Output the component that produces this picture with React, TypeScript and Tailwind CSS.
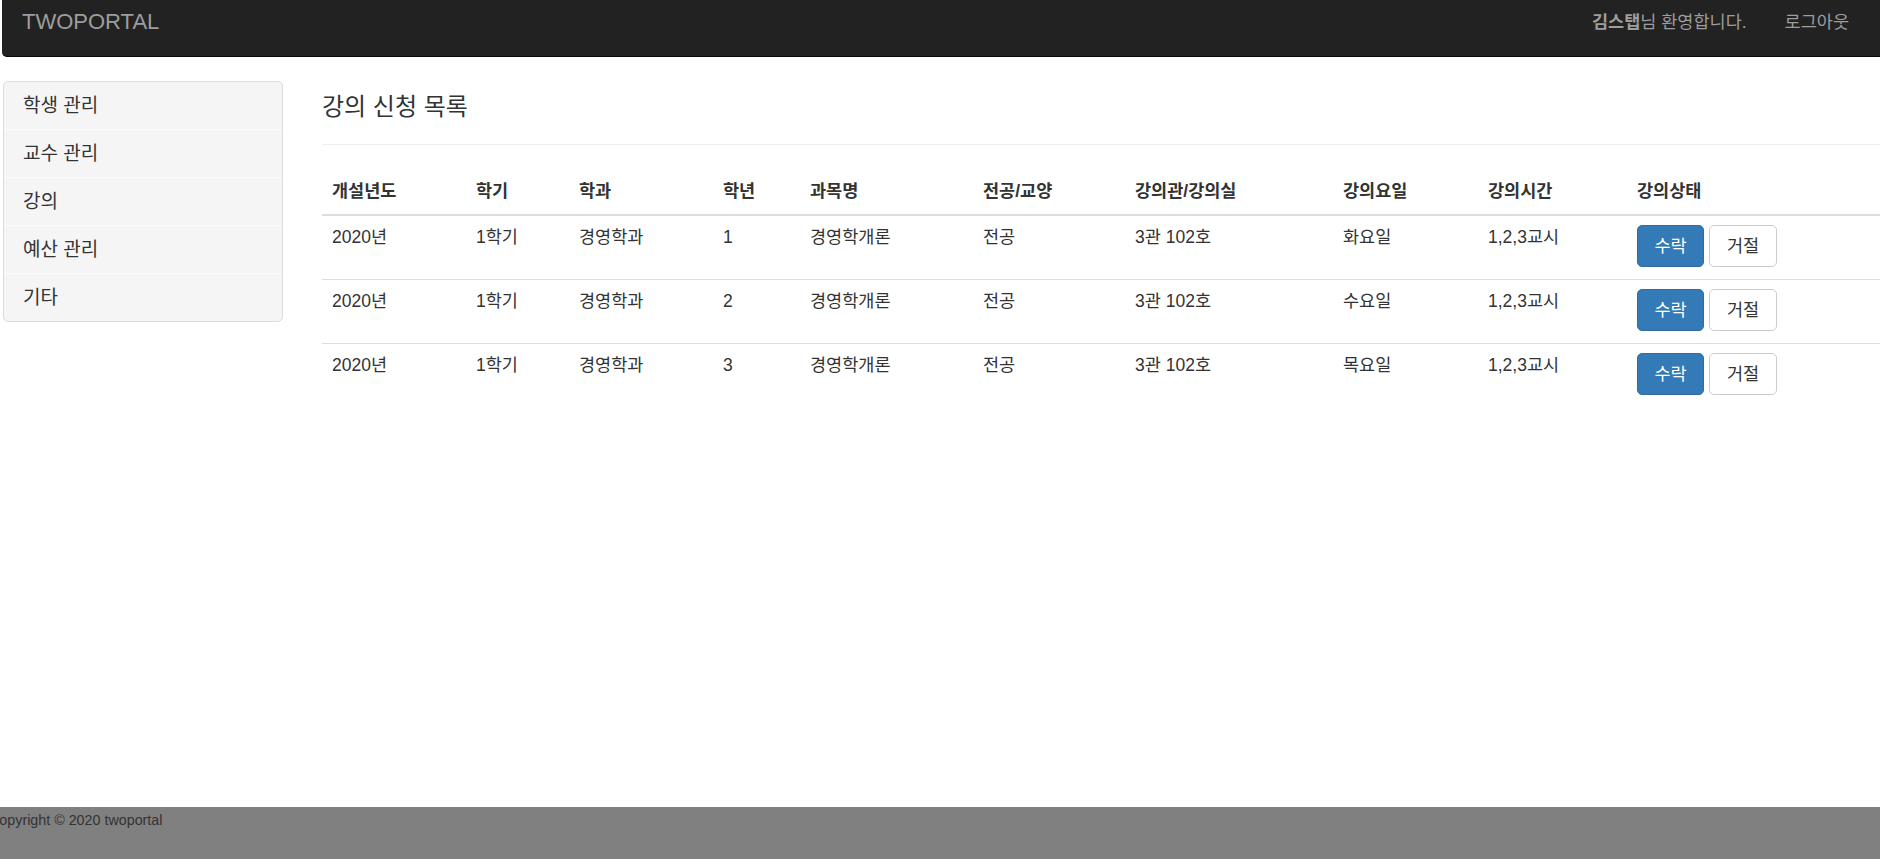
import React from 'react';

type Course = {
  year: string;
  term: string;
  dept: string;
  grade: string;
  subject: string;
  kind: string;
  room: string;
  day: string;
  time: string;
};

const courses: Course[] = [
  { year: '2020년', term: '1학기', dept: '경영학과', grade: '1', subject: '경영학개론', kind: '전공', room: '3관 102호', day: '화요일', time: '1,2,3교시' },
  { year: '2020년', term: '1학기', dept: '경영학과', grade: '2', subject: '경영학개론', kind: '전공', room: '3관 102호', day: '수요일', time: '1,2,3교시' },
  { year: '2020년', term: '1학기', dept: '경영학과', grade: '3', subject: '경영학개론', kind: '전공', room: '3관 102호', day: '목요일', time: '1,2,3교시' },
];

const headers = ['개설년도', '학기', '학과', '학년', '과목명', '전공/교양', '강의관/강의실', '강의요일', '강의시간', '강의상태'];
const colWidths = ['w-[144px]', 'w-[103px]', 'w-[144px]', 'w-[87px]', 'w-[173px]', 'w-[152px]', 'w-[208px]', 'w-[145px]', 'w-[149px]', ''];

const menu = ['학생 관리', '교수 관리', '강의', '예산 관리', '기타'];

export default function App() {
  return (
    <div className="min-h-screen flex flex-col overflow-x-hidden bg-white text-[#333] font-['Liberation_Sans','Noto_Sans_CJK_KR',sans-serif]">
      {/* navbar */}
      <div className="h-[57px] ml-[2px] -mr-[4px] bg-[#222] border-b border-[#080808] rounded-bl-[5px] flex items-start justify-between pt-[9px] shrink-0">
        <div className="pl-[20px] text-[22px] leading-[26px] text-[#9d9d9d]">TWOPORTAL</div>
        <div className="flex items-start text-[17.5px] leading-[26px] text-[#9d9d9d] pr-[35px]">
          <span>
            <b className="font-bold">김스탭</b>님 환영합니다.
          </span>
          <span className="ml-[38px]">로그아웃</span>
        </div>
      </div>

      {/* main */}
      <div className="flex-1 flex items-start">
        <div className="mt-[24px] ml-[3px] w-[280px] shrink-0 bg-[#f5f5f5] border border-[#ddd] rounded-[5px] text-[19px]">
          {menu.map((m, i) => (
            <div
              key={m}
              className={`pl-[19px] py-[11px] leading-[25px] ${i > 0 ? 'border-t border-[#fbfbfb]' : ''}`}
            >
              {m}
            </div>
          ))}
        </div>

        <div className="flex-1 min-w-0 ml-[39px]">
          <div className="mt-[37px] pb-[24px] border-b border-[#eee]">
            <h4 className="text-[24px] leading-[26px] font-normal">강의 신청 목록</h4>
          </div>

          <table className="mt-[24px] w-full table-fixed border-collapse text-[17.5px]">
            <colgroup>
              {colWidths.map((w, i) => (
                <col key={i} className={w} />
              ))}
            </colgroup>
            <thead>
              <tr className="border-b-[2.5px] border-[#ddd]">
                {headers.map((h) => (
                  <th key={h} className="text-left font-bold px-[10px] py-[10px] leading-[25px] whitespace-nowrap">
                    {h}
                  </th>
                ))}
              </tr>
            </thead>
            <tbody>
              {courses.map((c, i) => (
                <tr key={i} className={i < courses.length - 1 ? 'border-b border-[#ddd]' : ''}>
                  {[c.year, c.term, c.dept, c.grade, c.subject, c.kind, c.room, c.day, c.time].map((v, j) => (
                    <td key={j} className="align-top px-[10px] pt-[9px] pb-[12px] leading-[25px] whitespace-nowrap">
                      {v}
                    </td>
                  ))}
                  <td className="align-top px-[10px] pt-[9px] pb-[12px] whitespace-nowrap">
                    <div className="flex gap-[5px]">
                      <button className="h-[42px] w-[67px] rounded-[5px] bg-[#337ab7] border border-[#2e6da4] text-white text-[17.5px] leading-[25px]">
                        수락
                      </button>
                      <button className="h-[42px] w-[68px] rounded-[5px] bg-white border border-[#ccc] text-[#333] text-[17.5px] leading-[25px]">
                        거절
                      </button>
                    </div>
                  </td>
                </tr>
              ))}
            </tbody>
          </table>
        </div>
      </div>

      {/* footer */}
      <div className="h-[52px] shrink-0 bg-[#808080] pt-[3px]">
        <p className="-ml-[11px] text-[14.3px] leading-[20px] text-[#333]">Copyright © 2020 twoportal</p>
      </div>
    </div>
  );
}
